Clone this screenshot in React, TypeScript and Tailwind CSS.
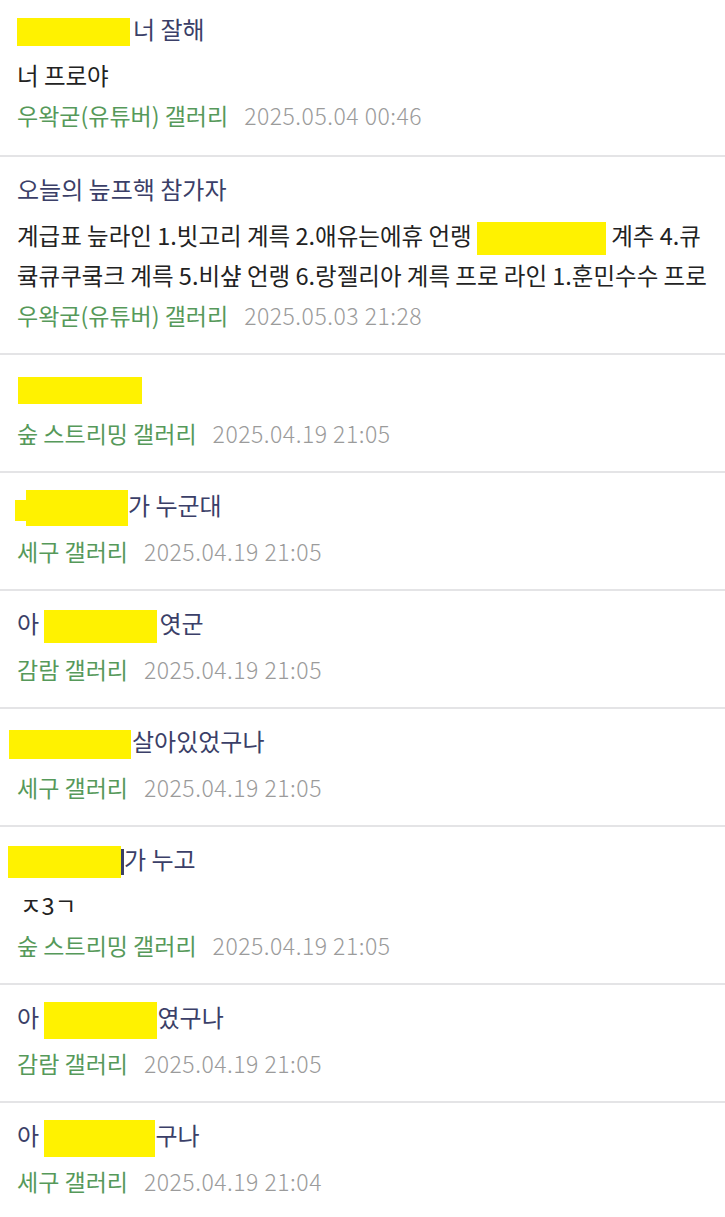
import type { ReactNode } from "react";

type Comment = {
  title: ReactNode;
  body?: ReactNode[];
  gallery: string;
  date: string;
  first?: boolean;
};

function Box({ w, h = 30, className = "" }: { w: number; h?: number; className?: string }) {
  return (
    <span
      className={`inline-block align-middle bg-[#fff200] ${className}`}
      style={{ width: w, height: h }}
    />
  );
}

const comments: Comment[] = [
  {
    first: true,
    title: (
      <>
        <Box w={113} h={28} />
        <span className="ml-[3px]">너 잘해</span>
      </>
    ),
    body: ["너 프로야"],
    gallery: "우왁굳(유튜버) 갤러리",
    date: "2025.05.04 00:46",
  },
  {
    title: "오늘의 늪프핵 참가자",
    body: [
      <>
        계급표 늪라인 1.빗고리 계륵 2.애유는에휴 언랭 <Box w={129} h={33} /> 계추 4.큐
      </>,
      "큨큐쿠쿸크 계륵 5.비샾 언랭 6.랑젤리아 계륵 프로 라인 1.훈민수수 프로",
    ],
    gallery: "우왁굳(유튜버) 갤러리",
    date: "2025.05.03 21:28",
  },
  {
    title: <Box w={124} h={27} className="ml-[1px]" />,
    gallery: "숲 스트리밍 갤러리",
    date: "2025.04.19 21:05",
  },
  {
    title: (
      <>
        <span className="relative -ml-[2px] inline-block h-[36px] w-[113px] align-middle">
          <span className="absolute left-0 top-[10px] h-[21px] w-[12px] bg-[#fff200]" />
          <span className="absolute left-[11px] top-0 h-[36px] w-[102px] bg-[#fff200]" />
        </span>
        <span>가 누군대</span>
      </>
    ),
    gallery: "세구 갤러리",
    date: "2025.04.19 21:05",
  },
  {
    title: (
      <>
        아 <Box w={113} h={33} />
        <span className="ml-[2px]">엿군</span>
      </>
    ),
    gallery: "감람 갤러리",
    date: "2025.04.19 21:05",
  },
  {
    title: (
      <>
        <Box w={122} h={29} className="-ml-[8px]" />
        <span className="ml-[1px]">살아있었구나</span>
      </>
    ),
    gallery: "세구 갤러리",
    date: "2025.04.19 21:05",
  },
  {
    title: (
      <>
        <Box w={113} h={32} className="-ml-[9px]" />
        <span className="inline-block h-[26px] w-[3px] align-middle bg-[#3d4266]" />
        <span>가 누고</span>
      </>
    ),
    body: [<span className="ml-[3px]">ㅈ3ㄱ</span>],
    gallery: "숲 스트리밍 갤러리",
    date: "2025.04.19 21:05",
  },
  {
    title: (
      <>
        아 <Box w={113} h={37} />
        <span>였구나</span>
      </>
    ),
    gallery: "감람 갤러리",
    date: "2025.04.19 21:05",
  },
  {
    title: (
      <>
        아 <Box w={111} h={37} />
        <span>구나</span>
      </>
    ),
    gallery: "세구 갤러리",
    date: "2025.04.19 21:04",
  },
];

function CommentRow({ c }: { c: Comment }) {
  return (
    <div
      className={`border-b-2 border-[#e4e4e6] px-[17px] ${
        c.first ? "pt-[9px] pb-[20px]" : "pt-[12px] pb-[18px]"
      }`}
    >
      <div className="h-[40px] whitespace-nowrap text-[24px] leading-[40px] text-[#3b3f68]">
        {c.title}
      </div>
      <div className="mt-[6px]">
        {c.body?.map((line, i) => (
          <div
            key={i}
            className="h-[40px] overflow-hidden whitespace-nowrap text-[23.5px] leading-[40px] text-[#222222]"
          >
            {line}
          </div>
        ))}
        <div className="flex h-[40px] items-center gap-[16px] whitespace-nowrap leading-[40px]">
          <span className="text-[23px] text-[#56995a]">{c.gallery}</span>
          <span className="text-[23px] font-light tracking-[0.5px] text-[#9b9b9b]">{c.date}</span>
        </div>
      </div>
    </div>
  );
}

export default function App() {
  return (
    <div
      className="h-[1217px] w-[725px] overflow-hidden bg-white"
      style={{ fontFamily: '"Noto Sans CJK KR", "Noto Sans", sans-serif' }}
    >
      {comments.map((c, i) => (
        <CommentRow key={i} c={c} />
      ))}
    </div>
  );
}
